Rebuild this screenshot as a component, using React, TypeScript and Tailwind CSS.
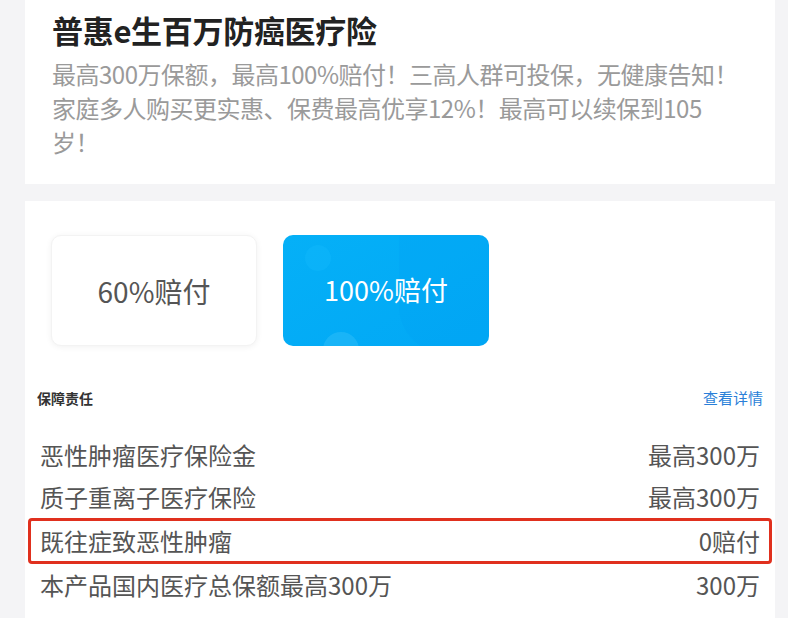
import React from "react";

const rows = [
  { l: "恶性肿瘤医疗保险金", r: "最高300万" },
  { l: "质子重离子医疗保险", r: "最高300万" },
  { l: "既往症致恶性肿瘤", r: "0赔付", hl: true },
  { l: "本产品国内医疗总保额最高300万", r: "300万" },
];

export default function App() {
  return (
    <div
      className="w-[788px] h-[618px] overflow-hidden bg-[#f4f4f6]"
      style={{ fontFamily: '"Noto Sans CJK SC", "Noto Sans", sans-serif' }}
    >
      <div className="ml-[25px] mr-[13px] bg-white pl-[27px] pr-[20px] pt-[9px] h-[184px]">
        <h1 className="text-[31px] leading-[42px] font-bold text-[#222] tracking-[-0.3px]">
          普惠e生百万防癌医疗险
        </h1>
        <p className="text-[24px] leading-[34px] text-[#9a9a9a] mt-[6px] tracking-[-0.5px]">
          最高300万保额，最高100%赔付！三高人群可投保，无健康告知！
          <br />
          家庭多人购买更实惠、保费最高优享12%！最高可以续保到105
          <br />
          岁！
        </p>
      </div>
      <div className="ml-[25px] mr-[13px] mt-[17px] bg-white h-[440px]">
        <div className="flex gap-[26px] pl-[26px] pt-[34px]">
          <div className="w-[206px] h-[111px] rounded-[10px] bg-white shadow-[0_1px_6px_rgba(0,0,0,0.06)] border border-[#f3f3f3] flex items-center justify-center text-[28px] text-[#555]">
            60%赔付
          </div>
          <div className="relative w-[206px] h-[111px] rounded-[10px] overflow-hidden bg-gradient-to-br from-[#05b0f7] to-[#02a8f5] flex items-center justify-center text-[27px] text-white">
            <div className="absolute left-[22px] top-[10px] w-[26px] h-[26px] rounded-full bg-[#12b7fa] opacity-45" />
            <div className="absolute right-[-30px] top-[-40px] w-[120px] h-[160px] rounded-[50px] bg-[#009ff2] opacity-25" />
            <div className="absolute left-[40px] bottom-[-22px] w-[36px] h-[36px] rounded-full bg-[#3cc2fb] opacity-40" />
            <span className="relative">100%赔付</span>
          </div>
        </div>
        <div className="flex justify-between items-center pl-[12px] pr-[12px] mt-[41px]">
          <span className="text-[14px] font-bold text-[#333]">保障责任</span>
          <span className="text-[15px] text-[#2a7fd8]">查看详情</span>
        </div>
        <div className="mt-[24px] px-[3px]">
          {rows.map((r) => (
            <div
              key={r.l}
              className={
                r.hl
                  ? "flex justify-between items-center h-[46px] border-[3px] border-[#e0301e] rounded-[4px] px-[9px] text-[24px] text-[#555]"
                  : "flex justify-between items-center h-[42px] px-[12px] text-[24px] text-[#555]"
              }
            >
              <span>{r.l}</span>
              <span>{r.r}</span>
            </div>
          ))}
        </div>
      </div>
    </div>
  );
}
